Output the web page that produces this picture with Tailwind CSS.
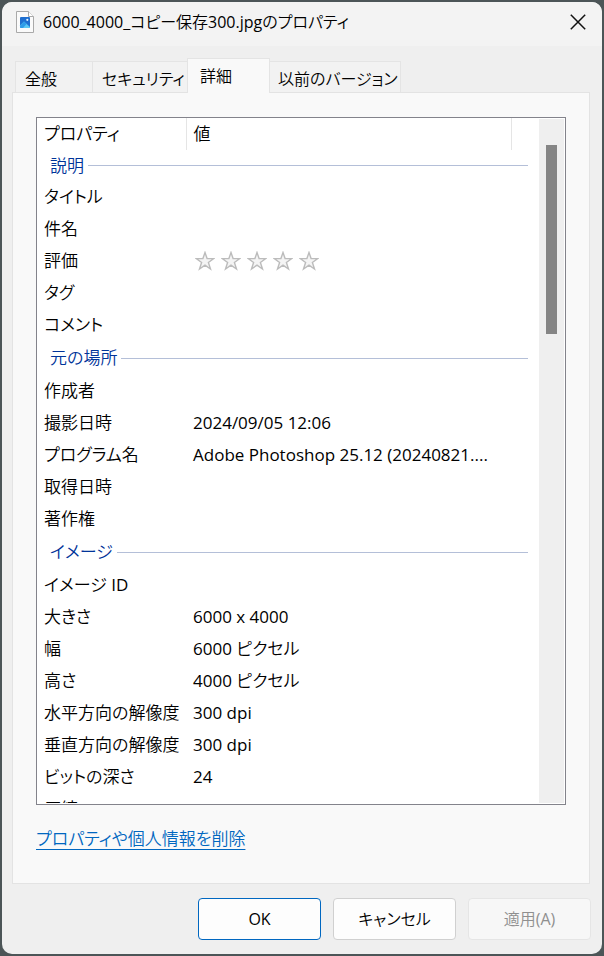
<!DOCTYPE html>
<html lang="ja">
<head>
    <meta charset="UTF-8">
    <meta name="viewport" content="width=device-width, initial-scale=1.0">
    <title>6000_4000_コピー保存300.jpgのプロパティ</title>
    <script src="https://cdn.jsdelivr.net/npm/@tailwindcss/browser@4"></script>
</head>
<body class="h-screen bg-[#4c5557] p-[2px] font-['Open_Sans','Noto_Sans_CJK_JP_DemiLight','Noto_Sans_CJK_JP',sans-serif] text-[17px] leading-6 text-black">

<!-- Star shape used by the rating row -->
<svg class="hidden">
    <symbol id="star" viewBox="0 0 20 20">
        <path d="M10 1.5 L12.1 7.6 H18.8 L13.4 11.5 L15.5 18 L10 14.1 L4.5 18 L6.6 11.5 L1.2 7.6 H7.9 Z" fill="#f4f4f4" stroke="#bcbcbc" stroke-width="1.4"/>
    </symbol>
</svg>

<div class="flex flex-col h-full rounded-[10px] overflow-hidden bg-[#efefef]">

    <!-- Title bar -->
    <header class="flex items-center h-11 shrink-0 bg-[#f3f3f3] pl-[14px] pr-4 pb-1">
        <svg class="w-[18px] h-[22px] mr-[9px]" viewBox="0 0 18 22">
            <path d="M.5 .5 H12.5 L17.5 5.5 V21.5 H.5 Z" fill="#fafafa" stroke="#a9a9a9"/>
            <path d="M12.5 .5 V5.5 H17.5" fill="#fff" stroke="#a9a9a9"/>
            <rect x="4" y="6" width="10" height="11" rx="1" fill="#1f6fd0"/>
            <path d="M4 14.5 L8 10.5 L14 16 V16.5 Q14 17 13 17 H5 Q4 17 4 16 Z" fill="#5cc8f5"/>
            <path d="M4 15 L8 10.5 L10.5 13 L7 17 H5 Q4 17 4 16 Z" fill="#2f9be8"/>
            <circle cx="11.3" cy="8.8" r="1.1" fill="#e8f6ff"/>
        </svg>
        <h1 class="grow text-base [font-feature-settings:'palt']">6000_4000_コピー保存300.jpgのプロパティ</h1>
        <button type="button" aria-label="閉じる" class="flex items-center justify-center w-4 h-4">
            <svg class="w-4 h-4" viewBox="0 0 16 16"><path d="M.8 .8 L15.2 15.2 M15.2 .8 L.8 15.2" stroke="#111" stroke-width="1.5"/></svg>
        </button>
    </header>

    <!-- Tabs -->
    <div role="tablist" class="flex items-end shrink-0 pl-[13px] pt-3 text-base [font-feature-settings:'palt']">
        <button role="tab" type="button" class="w-[78px] h-[31px] pl-[9px] pt-1 text-left whitespace-nowrap bg-[#f2f2f2] border border-b-0 border-[#e4e4e4]">全般</button>
        <button role="tab" type="button" class="w-[94px] h-[31px] pl-[9px] pt-1 text-left whitespace-nowrap bg-[#f2f2f2] border border-x-0 border-b-0 border-[#e4e4e4]">セキュリティ</button>
        <button role="tab" type="button" aria-selected="true" class="relative z-10 w-[83px] h-[35px] -mb-px pl-3 text-left whitespace-nowrap bg-[#f9f9f9] border border-b-0 border-[#e4e4e4]">詳細</button>
        <button role="tab" type="button" class="w-[131px] h-[31px] pl-2 pt-1 text-left whitespace-nowrap bg-[#f2f2f2] border border-l-0 border-b-0 border-[#e4e4e4]">以前のバージョン</button>
    </div>

    <main class="flex flex-col grow min-h-0 ml-[10px] mr-3 px-[23px] pt-6 pb-8 bg-[#f9f9f9] border border-[#e3e3e3]">

        <div class="flex grow min-h-0 overflow-hidden bg-white border border-[#83838b]">
            <div class="grow min-w-0 mb-px overflow-hidden">
                <table class="w-full table-fixed border-collapse text-left [font-feature-settings:'palt'] [&_th]:font-normal [&_tbody_th]:pl-[7px] [&_td]:pl-[7px] [&_tr]:whitespace-nowrap">
                    <colgroup>
                        <col class="w-[149px]">
                        <col>
                        <col class="w-[28px]">
                    </colgroup>
                    <thead>
                        <tr class="h-8">
                            <th class="pl-[7px] border-r border-[#e5e5e5]">プロパティ</th>
                            <th class="pl-[7px] border-r border-[#e5e5e5]">値</th>
                            <th></th>
                        </tr>
                    </thead>
                    <tbody>
                        <tr class="h-[31px] text-[#003399]">
                            <th colspan="3">
                                <div class="flex items-center gap-1 pl-[6px] pr-[11px]">説明<span class="grow h-px bg-[#b4bfd8]"></span></div>
                            </th>
                        </tr>
                        <tr class="h-8"><th>タイトル</th><td></td></tr>
                        <tr class="h-8"><th>件名</th><td></td></tr>
                        <tr class="h-8">
                            <th>評価</th>
                            <td>
                                <div class="flex gap-[6px] pl-[2px]" role="img" aria-label="評価なし">
                                    <svg class="w-5 h-5"><use href="#star"/></svg>
                                    <svg class="w-5 h-5"><use href="#star"/></svg>
                                    <svg class="w-5 h-5"><use href="#star"/></svg>
                                    <svg class="w-5 h-5"><use href="#star"/></svg>
                                    <svg class="w-5 h-5"><use href="#star"/></svg>
                                </div>
                            </td>
                        </tr>
                        <tr class="h-8"><th>タグ</th><td></td></tr>
                        <tr class="h-8"><th>コメント</th><td></td></tr>
                    </tbody>
                    <tbody>
                        <tr class="h-[34px] text-[#003399]">
                            <th colspan="3">
                                <div class="flex items-center gap-1 pl-[6px] pr-[11px]">元の場所<span class="grow h-px bg-[#b4bfd8]"></span></div>
                            </th>
                        </tr>
                        <tr class="h-8"><th>作成者</th><td></td></tr>
                        <tr class="h-8"><th>撮影日時</th><td>2024/09/05 12:06</td></tr>
                        <tr class="h-8"><th>プログラム名</th><td>Adobe Photoshop 25.12 (20240821....</td></tr>
                        <tr class="h-8"><th>取得日時</th><td></td></tr>
                        <tr class="h-8"><th>著作権</th><td></td></tr>
                    </tbody>
                    <tbody>
                        <tr class="h-[34px] text-[#003399]">
                            <th colspan="3">
                                <div class="flex items-center gap-1 pl-[6px] pr-[11px]">イメージ<span class="grow h-px bg-[#b4bfd8]"></span></div>
                            </th>
                        </tr>
                        <tr class="h-8"><th>イメージ ID</th><td></td></tr>
                        <tr class="h-8"><th>大きさ</th><td>6000 x 4000</td></tr>
                        <tr class="h-8"><th>幅</th><td>6000 ピクセル</td></tr>
                        <tr class="h-8"><th>高さ</th><td>4000 ピクセル</td></tr>
                        <tr class="h-8"><th>水平方向の解像度</th><td>300 dpi</td></tr>
                        <tr class="h-8"><th>垂直方向の解像度</th><td>300 dpi</td></tr>
                        <tr class="h-8"><th>ビットの深さ</th><td>24</td></tr>
                        <tr class="h-8"><th>圧縮</th><td></td></tr>
                    </tbody>
                </table>
            </div>
            <!-- Scrollbar -->
            <div class="w-[25px] shrink-0 my-px mr-px pl-[7px] pt-[26px] bg-[#efefef]">
                <div class="w-[11px] h-[189px] bg-[#858585]"></div>
            </div>
        </div>

        <a href="#" class="self-start mt-[22px] text-[#0067c0] underline underline-offset-4 [font-feature-settings:'palt']">プロパティや個人情報を削除</a>
    </main>

    <footer class="flex justify-end gap-3 shrink-0 pt-[14px] pb-[14px] pr-[11px] text-base [font-feature-settings:'palt']">
        <button type="button" class="w-[123px] h-[42px] rounded-[4px] bg-[#fdfdfd] border border-[#0067c0]">OK</button>
        <button type="button" class="w-[123px] h-[42px] rounded-[4px] bg-[#fdfdfd] border border-[#d0d0d0]">キャンセル</button>
        <button type="button" disabled class="w-[123px] h-[42px] rounded-[4px] bg-[#f7f7f7] border border-[#e5e5e5] text-[#8f8f8f]">適用(A)</button>
    </footer>
</div>

</body>
</html>
